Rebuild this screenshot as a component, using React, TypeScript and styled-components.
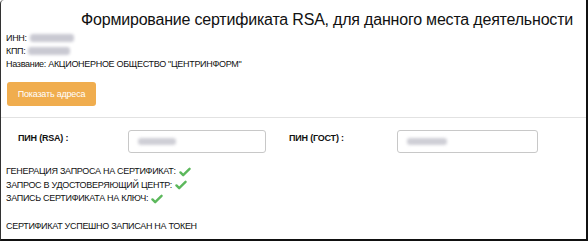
import React from "react";
import styled, { createGlobalStyle } from "styled-components";

const Global = createGlobalStyle`
  html, body { margin: 0; padding: 0; background: #fff; }
  body { font-family: Tahoma, "Liberation Sans", Arial, sans-serif; color: #111; }
`;

const Frame = styled.div`
  box-sizing: border-box;
  width: 588px;
  height: 241px;
  border-left: 1px solid #333;
  border-right: 2px solid #111;
  border-bottom: 2px solid #111;
  border-top-left-radius: 4px;
  background: #fff;
  display: flex;
  flex-direction: column;
  overflow: hidden;
`;

const Title = styled.h1`
  margin: 0;
  padding: 11px 13px 0 0;
  text-align: right;
  font-weight: normal;
  font-size: 16px;
  letter-spacing: -0.2px;
  line-height: 18px;
  color: #111;
`;

const Info = styled.div`
  padding: 3px 0 0 5px;
  display: flex;
  flex-direction: column;
  font-size: 9px;
  letter-spacing: -0.3px;
  line-height: 13px;
`;

const Blur = styled.span<{ w: number }>`
  display: inline-block;
  width: ${(p) => p.w}px;
  height: 8px;
  vertical-align: -1px;
  margin-left: 3px;
  background: #c9c9d2;
  filter: blur(1.6px);
  border-radius: 3px;
`;

const ButtonRow = styled.div`
  padding: 11px 0 11px 6px;
  border-bottom: 1px solid #e2e2e2;
`;

const OrangeButton = styled.button`
  width: 89px;
  height: 24px;
  border: none;
  border-radius: 3px;
  background: #f0ad4e;
  color: #fff;
  font-family: inherit;
  font-size: 9px;
  letter-spacing: -0.2px;
  padding: 0;
`;

const PinRow = styled.div`
  display: flex;
  align-items: center;
  padding: 12px 0 0 17px;
  height: 23px;
`;

const PinLabel = styled.div<{ w: number }>`
  width: ${(p) => p.w}px;
  font-weight: bold;
  font-size: 9px;
  letter-spacing: -0.2px;
  align-self: flex-start;
  padding-top: 3px;
`;

const PinInput = styled.div<{ w: number; gap: number }>`
  box-sizing: border-box;
  width: ${(p) => p.w}px;
  height: 23px;
  border: 1px solid #c8c8c8;
  border-radius: 3px;
  margin-right: ${(p) => p.gap}px;
  display: flex;
  align-items: center;
  padding-left: 9px;
`;

const InputBlur = styled.span<{ w: number }>`
  display: inline-block;
  width: ${(p) => p.w}px;
  height: 7px;
  background: #cfcfd6;
  filter: blur(1.5px);
  border-radius: 3px;
`;

const Steps = styled.div`
  padding: 12px 0 0 5px;
  display: flex;
  flex-direction: column;
  font-size: 9px;
  letter-spacing: -0.3px;
  line-height: 13.5px;
`;

const Step = styled.div`
  display: flex;
  align-items: center;
  gap: 3px;
`;

const Result = styled.div`
  padding: 15px 0 0 5px;
  font-size: 9px;
  letter-spacing: -0.3px;
`;

const Check = () => (
  <svg width="12" height="10" viewBox="0 0 13 11">
    <path
      d="M1.5 6 L4.5 9 L11.5 2"
      fill="none"
      stroke="#5cb85c"
      strokeWidth="2.6"
      strokeLinecap="round"
      strokeLinejoin="round"
    />
  </svg>
);

export default function App() {
  return (
    <>
      <Global />
      <Frame>
        <Title>Формирование сертификата RSA, для данного места деятельности</Title>
        <Info>
          <div>
            ИНН:<Blur w={44} />
          </div>
          <div>
            КПП:<Blur w={42} />
          </div>
          <div>Название: АКЦИОНЕРНОЕ ОБЩЕСТВО "ЦЕНТРИНФОРМ"</div>
        </Info>
        <ButtonRow>
          <OrangeButton>Показать адреса</OrangeButton>
        </ButtonRow>
        <PinRow>
          <PinLabel w={110}>ПИН (RSA) :</PinLabel>
          <PinInput w={138} gap={23}>
            <InputBlur w={38} />
          </PinInput>
          <PinLabel w={108}>ПИН (ГОСТ) :</PinLabel>
          <PinInput w={141} gap={0}>
            <InputBlur w={40} />
          </PinInput>
        </PinRow>
        <Steps>
          <Step>
            ГЕНЕРАЦИЯ ЗАПРОСА НА СЕРТИФИКАТ: <Check />
          </Step>
          <Step>
            ЗАПРОС В УДОСТОВЕРЯЮЩИЙ ЦЕНТР: <Check />
          </Step>
          <Step>
            ЗАПИСЬ СЕРТИФИКАТА НА КЛЮЧ: <Check />
          </Step>
        </Steps>
        <Result>СЕРТИФИКАТ УСПЕШНО ЗАПИСАН НА ТОКЕН</Result>
      </Frame>
    </>
  );
}
